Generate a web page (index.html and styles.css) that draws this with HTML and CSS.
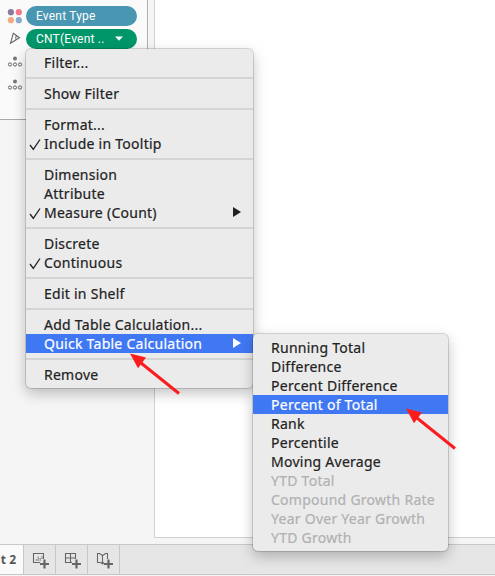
FILE: index.html
```html
<!DOCTYPE html>
<html lang="en">
<head>
<meta charset="utf-8">
<title>Worksheet</title>
<link rel="stylesheet" href="styles.css">
</head>
<body>
<div class="app">
  <div class="workspace">
    <aside class="marks">
      <div class="mark"><svg class="icon" width="16" height="16" viewBox="0 0 16 16"><circle cx="3.9" cy="4.2" r="3.1" fill="#8a7a9f"/><circle cx="11.8" cy="4.2" r="3.1" fill="#f2788a"/><circle cx="3.9" cy="12.2" r="3.1" fill="#f5aa82"/><circle cx="11.8" cy="12.2" r="3.1" fill="#8aaacf"/></svg><div class="pill blue"><span>Event Type</span></div></div>
      <div class="mark"><svg class="icon" width="16" height="16" viewBox="0 0 16 16" fill="none" stroke="#666" stroke-width="1.1"><path d="M6.3 2.3 12.5 6.8 3.5 12.3ZM9.5 4.7Q8 6.5 9 9"/></svg><div class="pill green"><span>CNT(Event ..</span><svg class="caret" width="8" height="5"><path d="M0 0.5H8L4 4.7Z" fill="#fff"/></svg></div></div>
      <div class="mark"><svg class="icon" width="16" height="16" viewBox="0 0 16 16" fill="none" stroke="#666"><circle cx="8" cy="4.5" r="2" fill="#777" stroke="none"/><circle cx="3" cy="10.5" r="1.6"/><circle cx="8" cy="10.5" r="1.6"/><circle cx="13" cy="10.5" r="1.6"/></svg></div>
      <div class="mark"><svg class="icon" width="16" height="16" viewBox="0 0 16 16" fill="none" stroke="#666"><circle cx="8" cy="4.5" r="2" fill="#777" stroke="none"/><circle cx="3" cy="10.5" r="1.6"/><circle cx="8" cy="10.5" r="1.6"/><circle cx="13" cy="10.5" r="1.6"/></svg></div>
    </aside>
    <main class="canvas"></main>
  </div>
  <footer class="tabs">
    <div class="tab active">t 2</div>
    <div class="tab"><svg width="18" height="18" viewBox="0 0 18 18" fill="none" stroke="#666"><path d="M9 11.5H2.5V2.5H12.5V8" stroke-width="1.1"/><path d="M5.2 10V8M7.2 10V5.5M9.2 10V7M11 8V5" stroke-width=".8"/><path d="M13.5 8.5V17.5M9 13H18" stroke-width="2.2"/></svg></div>
    <div class="tab"><svg width="18" height="18" viewBox="0 0 18 18" fill="none" stroke="#666"><path d="M9 11.5H2.5V2.5H12.5V8M2.5 7H12.5M7.5 2.5V11.5" stroke-width="1.1"/><path d="M13.5 8.5V17.5M9 13H18" stroke-width="2.2"/></svg></div>
    <div class="tab"><svg width="18" height="18" viewBox="0 0 18 18" fill="none" stroke="#666"><path d="M9 11.5 7.5 13 6 11.5H2.5V2.5H4.5L7.5 4.5 10.5 2.5H12.5V8M7.5 4.5V13" stroke-width="1.1"/><path d="M13.5 8.5V17.5M9 13H18" stroke-width="2.2"/></svg></div>
  </footer>
</div>

<div class="menu main-menu">
  <div class="item">Filter...</div>
  <hr>
  <div class="item">Show Filter</div>
  <hr>
  <div class="item">Format...</div>
  <div class="item"><svg class="check" width="12" height="14" viewBox="0 0 12 14"><path d="M1 8 4.3 12.3 11 2.5"/></svg>Include in Tooltip</div>
  <hr>
  <div class="item">Dimension</div>
  <div class="item">Attribute</div>
  <div class="item"><svg class="check" width="12" height="14" viewBox="0 0 12 14"><path d="M1 8 4.3 12.3 11 2.5"/></svg>Measure (Count)<svg class="more" width="8" height="10"><path d="M0 0 8 5 0 10Z"/></svg></div>
  <hr>
  <div class="item">Discrete</div>
  <div class="item"><svg class="check" width="12" height="14" viewBox="0 0 12 14"><path d="M1 8 4.3 12.3 11 2.5"/></svg>Continuous</div>
  <hr>
  <div class="item">Edit in Shelf</div>
  <hr>
  <div class="item">Add Table Calculation...</div>
  <div class="item selected">Quick Table Calculation<svg class="more" width="8" height="10"><path d="M0 0 8 5 0 10Z"/></svg></div>
  <hr>
  <div class="item">Remove</div>
</div>

<div class="menu sub-menu">
  <div class="item">Running Total</div>
  <div class="item">Difference</div>
  <div class="item">Percent Difference</div>
  <div class="item selected">Percent of Total</div>
  <div class="item">Rank</div>
  <div class="item">Percentile</div>
  <div class="item">Moving Average</div>
  <div class="item disabled">YTD Total</div>
  <div class="item disabled">Compound Growth Rate</div>
  <div class="item disabled">Year Over Year Growth</div>
  <div class="item disabled">YTD Growth</div>
</div>

<svg class="arrow first" width="50" height="42" viewBox="0 0 50 42"><path d="M49 40.5 11 10" stroke="#fb1d1d" stroke-width="3"/><path d="M0 0.5 16 4.5 8 15.3Z" fill="#fb1d1d"/></svg>
<svg class="arrow second" width="50" height="42" viewBox="0 0 50 42"><path d="M49 40.5 11 10" stroke="#fb1d1d" stroke-width="3"/><path d="M0 0.5 16 4.5 8 15.3Z" fill="#fb1d1d"/></svg>
</body>
</html>
```
FILE: styles.css
```css
* { box-sizing: border-box; }
body { margin: 0; overflow: hidden; font-family: "Noto Sans", sans-serif; }
.app { width: 495px; height: 576px; display: flex; flex-direction: column; background: #f5f5f5; }
.workspace { flex: 1; display: flex; gap: 6px; }
.marks { width: 148px; height: 120px; padding: 4px 0 0 7px; background: #fafafa; border-right: 1px solid #b0b0b0; border-bottom: 1px solid #a8a8a8; }
.mark { height: 23px; display: flex; align-items: center; gap: 3px; }
.icon { flex: none; }
.pill { width: 111px; height: 20px; border-radius: 10px; padding: 0 10px; display: flex; align-items: center; justify-content: space-between; color: #fff; font: 12px/20px Roboto, sans-serif; letter-spacing: .2px; white-space: nowrap; }
.blue { background: #4996b2; }
.green { background: #00966a; }
.caret { margin-right: 4px; }
.canvas { flex: 1; height: 538px; background: #fff; border-left: 1px solid #d0d0d0; border-bottom: 1px solid #d0d0d0; }
.tabs { height: 31px; margin-bottom: 1px; flex: none; display: flex; background: #e6e6e6; border-top: 1px solid #c8c8c8; border-bottom: 1px solid #c8c8c8; }
.tab { width: 32px; border-right: 1px solid #c8c8c8; display: flex; align-items: center; justify-content: center; }
.tab.active { width: 24px; justify-content: flex-end; padding-right: 7px; background: #fafafa; color: #555; font: 700 12px "Open Sans", sans-serif; white-space: nowrap; }
.menu { position: absolute; padding: 4px 0; background: #ebebeb; border-radius: 5px; box-shadow: 0 0 0 1px rgba(0,0,0,.14), 0 5px 14px rgba(0,0,0,.25); color: #222; font-size: 14px; font-weight: 400; letter-spacing: .26px; -webkit-text-stroke: .2px currentColor; }
.main-menu { left: 26px; top: 49px; width: 227px; height: 339px; }
.sub-menu { left: 253px; top: 334px; width: 195px; height: 217px; }
.item { position: relative; height: 19px; line-height: 19px; padding-left: 18px; white-space: nowrap; }
.menu hr { height: 2px; margin: 5px 0; border: 0; background: #d4d4d4; }
.selected { background: #4078f3; color: #fff; }
.disabled { color: #b1b1b1; }
.check { position: absolute; left: 3px; top: 3px; fill: none; stroke: #222; stroke-width: 1.3; }
.more { position: absolute; right: 12px; top: 4px; fill: currentColor; }
.arrow { position: absolute; }
.first { left: 130px; top: 353px; }
.second { left: 406px; top: 408px; }
```
